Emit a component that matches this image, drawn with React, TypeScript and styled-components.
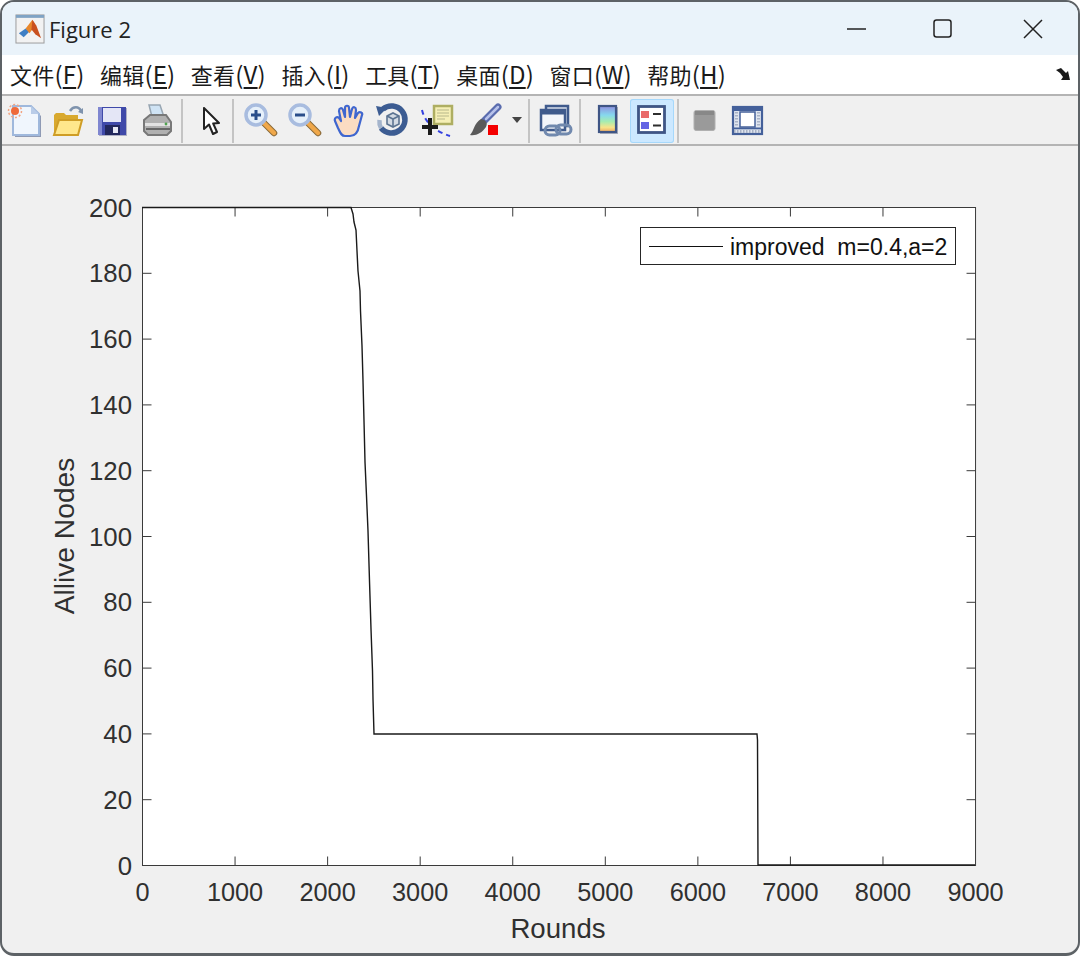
import React from 'react'
import styled, { createGlobalStyle } from 'styled-components'

const GlobalStyle = createGlobalStyle`
  html, body {
    margin: 0;
    padding: 0;
    background: #ffffff;
  }
`
const Window = styled.div`
  width: 1080px;
  height: 956px;
  box-sizing: border-box;
  display: flex;
  flex-direction: column;
  border: solid #5d6266;
  border-width: 2px 2px 3px 2px;
  border-radius: 14px;
  overflow: hidden;
  background: #f0f0f0;
`
const TitleBar = styled.div`
  height: 53px;
  flex: none;
  display: flex;
  align-items: center;
  padding-left: 13px;
  background: #eaf3fa;
`
const TitleText = styled.span`
  margin-left: 4px;
  font-family: 'Open Sans', 'Noto Sans', sans-serif;
  font-size: 22px;
  color: #222;
`
const WindowControls = styled.div`
  margin-left: auto;
  display: flex;
`
const WindowControl = styled.div`
  width: 90px;
  height: 53px;
  display: flex;
  align-items: center;
  justify-content: center;
`
const MenuBar = styled.div`
  height: 39px;
  flex: none;
  box-sizing: content-box;
  display: flex;
  align-items: center;
  gap: 15.5px;
  padding-left: 8px;
  background: #ffffff;
  border-bottom: 2px solid #b4b4b4;
`
const MenuItem = styled.span`
  margin-top: -2px;
  font-family: 'Noto Sans CJK SC', 'Noto Sans', sans-serif;
  font-size: 22px;
  letter-spacing: 0.2px;
  color: #1a1a1a;
  u {
    text-underline-offset: 3px;
  }
`
const MenuKey = styled.span`
  font-size: 24px;
`
const MenuCorner = styled.div`
  margin-left: auto;
  margin-right: 7px;
  display: flex;
`
const ToolBar = styled.div`
  height: 50px;
  flex: none;
  box-sizing: border-box;
  display: flex;
  align-items: flex-start;
  padding-top: 3px;
  background: #f0f0f0;
  border-bottom: 2px solid #b4b4b4;
`
const Tool = styled.div<{ $w?: number; $active?: boolean }>`
  width: ${(p) => p.$w ?? 44}px;
  height: 44px;
  flex: none;
  box-sizing: border-box;
  border-radius: 3px;
  background: ${(p) => (p.$active ? '#cce8ff' : 'transparent')};
  box-shadow: ${(p) => (p.$active ? 'inset 0 0 0 1px #a6d8fb' : 'none')};
  svg {
    display: block;
    filter: blur(0.5px);
  }
`
const ToolSep = styled.div<{ $l: number; $r: number }>`
  width: 2px;
  height: 44px;
  flex: none;
  margin: 0 ${(p) => p.$r}px 0 ${(p) => p.$l}px;
  background: #c4c4c4;
`
const Canvas = styled.div`
  position: relative;
  flex: 1;
  min-height: 0;
`
const Legend = styled.div`
  position: absolute;
  left: 638px;
  top: 81px;
  width: 316px;
  height: 38px;
  box-sizing: border-box;
  display: flex;
  align-items: center;
  padding-left: 8px;
  background: #ffffff;
  border: 1px solid #262626;
`
const LegendLine = styled.div`
  width: 74px;
  height: 1px;
  background: #111;
`
const LegendText = styled.span`
  margin: 3px 0 0 7px;
  font-family: 'Liberation Sans', Arial, sans-serif;
  font-size: 23px;
  white-space: pre;
  color: #111;
`

const TICK = { fontFamily: "'Liberation Sans', Arial, sans-serif", fill: '#303030' }
const px = (r: number) => 140.5 + r * 0.09256
const py = (n: number) => 719.5 - n * 3.29

const curve = [
  [140, 61.5], [349, 61.5], [351, 68], [352, 76], [354, 84], [355, 105], [356, 125], [358, 145], [358.5, 165],
  [360, 200], [361, 235], [362, 275], [363, 316], [364.5, 350], [366, 385], [367.5, 435], [369, 483], [370.5, 525],
  [371, 553], [372, 588], [755, 588], [755.5, 594], [756, 719], [973, 719],
]

const Plot = () => (
  <svg width="1076" height="807" viewBox="0 0 1076 807">
    <rect x={px(0)} y={py(200)} width={px(9000) - px(0)} height={py(0) - py(200)} fill="#fff" stroke="#3a3a3a" strokeWidth="1" />
    {Array.from({ length: 10 }, (_, i) => i * 1000).map((r) => (
      <g key={r}>
        {r > 0 && r < 9000 && (
          <>
            <line x1={px(r)} x2={px(r)} y1={py(0)} y2={py(0) - 9} stroke="#3a3a3a" />
            <line x1={px(r)} x2={px(r)} y1={py(200)} y2={py(200) + 9} stroke="#3a3a3a" />
          </>
        )}
        <text x={px(r)} y={755} textAnchor="middle" fontSize="25.3" {...TICK}>{r}</text>
      </g>
    ))}
    {Array.from({ length: 11 }, (_, i) => i * 20).map((n) => (
      <g key={n}>
        {n > 0 && n < 200 && (
          <>
            <line x1={px(0)} x2={px(0) + 9} y1={py(n)} y2={py(n)} stroke="#3a3a3a" />
            <line x1={px(9000)} x2={px(9000) - 9} y1={py(n)} y2={py(n)} stroke="#3a3a3a" />
          </>
        )}
        <text x={130} y={py(n) + 9} textAnchor="end" fontSize="25.8" {...TICK}>{n}</text>
      </g>
    ))}
    <polyline points={curve.map((p) => p.join(',')).join(' ')} fill="none" stroke="#1a1a1a" strokeWidth="1.4" />
    <text x={556} y={792} textAnchor="middle" fontSize="27.6" {...TICK}>Rounds</text>
    <text transform="translate(72 390) rotate(-90)" textAnchor="middle" fontSize="28.2" {...TICK}>Allive Nodes</text>
  </svg>
)

const MatlabIcon = () => (
  <svg width="30" height="30" viewBox="0 0 31 31">
    <rect x="1" y="1" width="29" height="29" fill="#f2f2f2" stroke="#9a9a9a" />
    <rect x="1" y="1" width="29" height="3" fill="#7fa3c4" />
    <path d="M4 20 L11 15 L15 18 L9 24 Z" fill="#3f7fc4" />
    <path d="M11 15 L18 6 L21 12 L15 20 Z" fill="#e8862a" />
    <path d="M18 6 L22 12 L27 25 L21 21 L17 16 Z" fill="#c9501e" />
  </svg>
)

const Ic = ({ children }: { children: React.ReactNode }) => (
  <svg width="44" height="44" viewBox="0 0 44 44">{children}</svg>
)

const NewIcon = () => (
  <Ic>
    <path d="M13 9 H31 L39 17 V38 H13 Z" fill="#8f9ab4" />
    <path d="M11 7 H29 L37 15 V36 H11 Z" fill="#f0f6fd" stroke="#9fb8dc" strokeWidth="2" />
    <path d="M29 7 V15 H37 Z" fill="#b9cce8" />
    <circle cx="13" cy="12" r="4" fill="#ef6a3a" />
    <circle cx="13" cy="12" r="6.5" fill="none" stroke="#f2a583" strokeWidth="1.5" strokeDasharray="2 2" />
  </Ic>
)
const OpenIcon = () => (
  <Ic>
    <path d="M24 12 C27 7 33 7 35 12" fill="none" stroke="#7f93ad" strokeWidth="2.5" />
    <path d="M32 13 L37 9 L37 15 Z" fill="#7f93ad" />
    <path d="M8 36 V16 L10 14 H18 L20 16 H32 V36 Z" fill="#d9a92e" />
    <path d="M8 36 L13 21 H36 L32 36 Z" fill="#ffe78c" stroke="#cf9d25" strokeWidth="2" />
  </Ic>
)
const SaveIcon = () => (
  <Ic>
    <rect x="9" y="9" width="28" height="28" fill="#aeb0c4" />
    <rect x="8" y="8" width="28" height="28" fill="#3f49a9" />
    <rect x="8" y="8" width="4" height="28" fill="#7f86d0" />
    <rect x="13" y="9" width="18" height="14" fill="#e4e6f6" />
    <rect x="15" y="26" width="15" height="10" fill="#22275c" />
    <rect x="23" y="28" width="5" height="6" fill="#e6e8f4" />
  </Ic>
)
const PrintIcon = () => (
  <Ic>
    <path d="M15 6 H26 L30 18 H18 Z" fill="#cfe3f4" stroke="#98a6b2" strokeWidth="1.5" />
    <path d="M10 21 L16 16 H32 L37 23 V32 L33 36 H14 L10 32 Z" fill="#b0b0b0" stroke="#787878" strokeWidth="2" />
    <path d="M11 24 H36 V27 H11 Z" fill="#e2e2e2" />
    <path d="M12 30 H36" stroke="#666" strokeWidth="2" />
    <circle cx="32" cy="25" r="1.4" fill="#4da24d" />
  </Ic>
)
const ArrowIcon = () => (
  <Ic>
    <path d="M16 9 V30 L21 25.5 L25 35 L29 33 L25.2 24.5 L31 24 Z" fill="#fff" stroke="#222" strokeWidth="2" strokeLinejoin="round" />
  </Ic>
)
const ZoomIcon = ({ plus }: { plus?: boolean }) => (
  <Ic>
    <path d="M26 24 L36 34" stroke="#8a6a3a" strokeWidth="6.5" strokeLinecap="round" />
    <path d="M26 24 L36 34" stroke="#f0a84a" strokeWidth="4.5" strokeLinecap="round" />
    <circle cx="18" cy="16" r="10" fill="#e6f0fa" stroke="#a8bcdf" strokeWidth="3.5" />
    <path d="M13 16 H23" stroke="#2a4e8a" strokeWidth="3" />
    {plus && <path d="M18 11 V21" stroke="#2a4e8a" strokeWidth="3" />}
  </Ic>
)
const HandIcon = () => (
  <Ic>
    <path
      d="M9 22 C8 19 11 17 13 19 L15 22 L13 12 C13 9 16 8 17 11 L19 18 L19 9 C19 6 23 6 23 9 L24 18 L26 10 C27 7 30 8 30 11 L29 19 L32 14 C34 12 37 14 36 16 L33 27 C32 33 29 37 24 37 H19 C15 37 14 33 12 29 Z"
      fill="#fbdcc2"
      stroke="#3f66cf"
      strokeWidth="2.2"
      strokeLinejoin="round"
    />
  </Ic>
)
const RotateIcon = () => (
  <Ic>
    <path d="M12 10 A13.5 13.5 0 1 1 10 29" fill="none" stroke="#3c5c92" strokeWidth="5.5" />
    <path d="M10 29 A13.5 13.5 0 0 1 8.5 21" fill="none" stroke="#a4b4cc" strokeWidth="4.5" />
    <path d="M5 7 L16 9 L8 17 Z" fill="#3c5c92" />
    <path d="M16 17 L22 14 L28 17 V25 L22 28 L16 25 Z" fill="#d4dbe4" stroke="#5c7492" strokeWidth="1.6" />
    <path d="M16 17 L22 20 L28 17 M22 20 V28" fill="none" stroke="#5c7492" strokeWidth="1.6" />
  </Ic>
)
const DataCursorIcon = () => (
  <Ic>
    <rect x="19" y="7" width="18" height="18" fill="#f5efb6" stroke="#aeae62" strokeWidth="2.5" />
    <path d="M22 11 H34 M22 14 H34 M22 17 H34 M22 20 H30" stroke="#b7b78a" strokeWidth="1.2" />
    <path d="M7 11 C9 20 16 31 35 37" fill="none" stroke="#3340e0" strokeWidth="2" strokeDasharray="5 4" />
    <path d="M15 19 V36 M7 28 H23" stroke="#1b1b1b" strokeWidth="4" />
  </Ic>
)
const BrushIcon = () => (
  <Ic>
    <path d="M36 8 L22 22" stroke="#5a6cae" strokeWidth="7" strokeLinecap="round" />
    <path d="M36 8 L24 20" stroke="#b7c2ea" strokeWidth="2.5" strokeLinecap="round" />
    <path d="M19 20 C24 21 26 24 24 28 C20 34 14 37 8 36 C12 32 12 24 19 20 Z" fill="#5a5a5a" />
    <rect x="26" y="26" width="10" height="10" fill="#f40000" />
  </Ic>
)
const LinkIcon = () => (
  <Ic>
    <rect x="13" y="7" width="22" height="20" fill="#d8dfeb" stroke="#3f5a8c" strokeWidth="2.5" />
    <rect x="8" y="11" width="24" height="20" fill="#f3f5fa" stroke="#3f5a8c" strokeWidth="2.5" />
    <rect x="8" y="11" width="24" height="4.5" fill="#3f5a8c" />
    <rect x="12" y="27" width="15" height="9" rx="4.5" fill="none" stroke="#7189ae" strokeWidth="3" />
    <rect x="23" y="26" width="15" height="9" rx="4.5" fill="none" stroke="#7189ae" strokeWidth="3" />
  </Ic>
)
const ColorbarIcon = () => (
  <Ic>
    <defs>
      <linearGradient id="cb" x1="0" y1="0" x2="0" y2="1">
        <stop offset="0" stopColor="#8f8fe0" />
        <stop offset="0.35" stopColor="#86d8ee" />
        <stop offset="0.6" stopColor="#a6ecb0" />
        <stop offset="0.82" stopColor="#f7e48a" />
        <stop offset="1" stopColor="#f0a860" />
      </linearGradient>
    </defs>
    <rect x="14" y="8" width="18" height="27" fill="#a8acb8" />
    <rect x="13" y="7" width="17" height="26" fill="url(#cb)" stroke="#3f5585" strokeWidth="2.2" />
  </Ic>
)
const LegendIcon = () => (
  <Ic>
    <rect x="8.5" y="7.5" width="26" height="26" fill="#fff" stroke="#3f5585" strokeWidth="2.8" />
    <rect x="11" y="12" width="8" height="7" fill="#e96a6a" />
    <rect x="11" y="23" width="8" height="7" fill="#6464e4" />
    <path d="M23 15 H31 M23 26.5 H31" stroke="#2e2e2e" strokeWidth="2.2" />
  </Ic>
)
const BoxIcon = () => (
  <Ic>
    <rect x="11" y="11.5" width="21" height="20" rx="2" fill="#9a9a9a" stroke="#b0b0b0" />
    <rect x="12" y="12" width="19" height="4" fill="#888" />
  </Ic>
)
const WindowIcon = () => (
  <Ic>
    <rect x="8" y="9" width="29" height="27" fill="#a8aebc" />
    <rect x="7" y="8" width="29" height="27" fill="#dfe5ef" stroke="#44609a" strokeWidth="2.2" />
    <rect x="7" y="8" width="29" height="4" fill="#44609a" />
    <path d="M10.5 13 V28 M32.5 13 V28" stroke="#a8b2c6" strokeWidth="3" strokeDasharray="1.5 1.5" />
    <rect x="14" y="13" width="15" height="15" fill="#fff" stroke="#44609a" strokeWidth="1.5" />
    <rect x="8" y="28.5" width="27" height="1.8" fill="#44609a" />
    <path d="M8 32.5 H35" stroke="#a8b2c6" strokeWidth="3" strokeDasharray="1.5 1.5" />
  </Ic>
)
const DropIcon = () => (
  <svg width="14" height="44" viewBox="0 0 14 44">
    <path d="M2 18 H12 L7 24 Z" fill="#444" />
  </svg>
)

const menus = [
  ['文件', 'F'],
  ['编辑', 'E'],
  ['查看', 'V'],
  ['插入', 'I'],
  ['工具', 'T'],
  ['桌面', 'D'],
  ['窗口', 'W'],
  ['帮助', 'H'],
]

const App = () => {
  return (
    <>
      <GlobalStyle />
      <Window>
        <TitleBar>
          <MatlabIcon />
          <TitleText>Figure 2</TitleText>
          <WindowControls>
            <WindowControl>
              <svg width="26" height="20" viewBox="0 0 26 20">
                <path d="M7 10 H26" stroke="#222" strokeWidth="1.5" />
              </svg>
            </WindowControl>
            <WindowControl>
              <svg width="20" height="20" viewBox="0 0 20 20">
                <rect x="1" y="1" width="17" height="17" rx="2.5" fill="none" stroke="#222" strokeWidth="1.5" />
              </svg>
            </WindowControl>
            <WindowControl>
              <svg width="20" height="20" viewBox="0 0 20 20">
                <path d="M1 1 L19 19 M19 1 L1 19" stroke="#222" strokeWidth="1.5" />
              </svg>
            </WindowControl>
          </WindowControls>
        </TitleBar>
        <MenuBar>
          {menus.map(([label, key]) => (
            <MenuItem key={key}>
              {label}
              <MenuKey>
                (<u>{key}</u>)
              </MenuKey>
            </MenuItem>
          ))}
          <MenuCorner>
            <svg width="15" height="13" viewBox="0 0 15 13">
              <path d="M0 2 L5 0 L10 5 L12 3 L14 12 L5 12 L7 9 L4 5 Z" fill="#1a1a1a" />
            </svg>
          </MenuCorner>
        </MenuBar>
        <ToolBar>
          <Tool><NewIcon /></Tool>
          <Tool><OpenIcon /></Tool>
          <Tool><SaveIcon /></Tool>
          <Tool><PrintIcon /></Tool>
          <ToolSep $l={3} $r={5} />
          <Tool><ArrowIcon /></Tool>
          <ToolSep $l={0} $r={4} />
          <Tool><ZoomIcon plus /></Tool>
          <Tool><ZoomIcon /></Tool>
          <Tool $w={45}><HandIcon /></Tool>
          <Tool><RotateIcon /></Tool>
          <Tool $w={47}><DataCursorIcon /></Tool>
          <Tool $w={48}><BrushIcon /></Tool>
          <Tool $w={14}><DropIcon /></Tool>
          <ToolSep $l={4} $r={3} />
          <Tool><LinkIcon /></Tool>
          <ToolSep $l={2} $r={5} />
          <Tool><ColorbarIcon /></Tool>
          <Tool $active><LegendIcon /></Tool>
          <ToolSep $l={3} $r={4} />
          <Tool $w={43}><BoxIcon /></Tool>
          <Tool><WindowIcon /></Tool>
        </ToolBar>
        <Canvas>
          <Plot />
          <Legend>
            <LegendLine />
            <LegendText>improved  m=0.4,a=2</LegendText>
          </Legend>
        </Canvas>
      </Window>
    </>
  )
}

export default App
